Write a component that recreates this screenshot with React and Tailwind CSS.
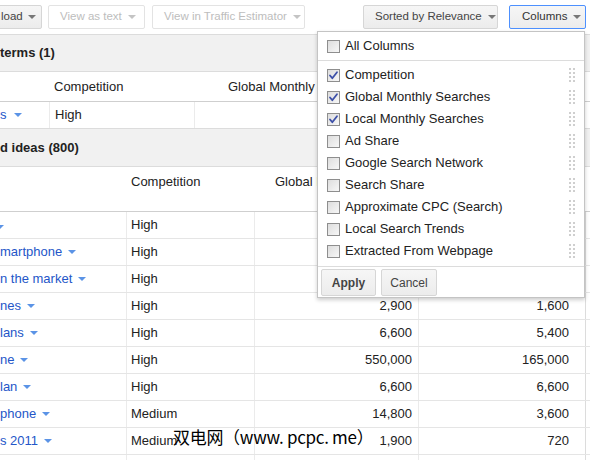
import React from 'react';

function GrayCaret() {
    return <span className="inline-block w-0 h-0 border-l-[4px] border-r-[4px] border-t-[4px] border-l-transparent border-r-transparent border-t-[#777]" />;
}

function LightCaret() {
    return <span className="inline-block w-0 h-0 border-l-[4px] border-r-[4px] border-t-[4px] border-l-transparent border-r-transparent border-t-[#c4c4c4]" />;
}

function BlueCaret() {
    return <span className="inline-block w-0 h-0 border-l-[4px] border-r-[4px] border-t-[4px] border-l-transparent border-r-transparent border-t-[#5b93e6]" />;
}

function Checkbox({ checked }) {
    return (
        <svg width="13" height="13" viewBox="0 0 13 13" className="shrink-0">
            <defs>
                <linearGradient id="cbg" x1="0" y1="0" x2="1" y2="1">
                    <stop offset="0" stopColor="#dcdcdc" />
                    <stop offset="1" stopColor="#f8f8f8" />
                </linearGradient>
            </defs>
            <rect x="0.5" y="0.5" width="12" height="12" fill="url(#cbg)" stroke="#8e8e8e" />
            {checked && (
                <path d="M3 6.5 L5.3 9.2 L10 3.2" fill="none" stroke="#3d50a8" strokeWidth="1.8" strokeLinecap="round" strokeLinejoin="round" />
            )}
        </svg>
    );
}

function Grip() {
    return (
        <div className="grid grid-cols-2 gap-x-[2px] gap-y-[2px]">
            {Array.from({ length: 8 }).map((_, i) => (
                <span key={i} className="block w-[2px] h-[2px] bg-[#cfcfcf]" />
            ))}
        </div>
    );
}

const columnas = [
    { nombre: 'Competition', activo: true },
    { nombre: 'Global Monthly Searches', activo: true },
    { nombre: 'Local Monthly Searches', activo: true },
    { nombre: 'Ad Share', activo: false },
    { nombre: 'Google Search Network', activo: false },
    { nombre: 'Search Share', activo: false },
    { nombre: 'Approximate CPC (Search)', activo: false },
    { nombre: 'Local Search Trends', activo: false },
    { nombre: 'Extracted From Webpage', activo: false },
];

const ideas = [
    { kw: '', comp: 'High', global: '', local: '', shift: true },
    { kw: 'martphone', comp: 'High', global: '', local: '' },
    { kw: 'n the market', comp: 'High', global: '', local: '' },
    { kw: 'nes', comp: 'High', global: '2,900', local: '1,600' },
    { kw: 'lans', comp: 'High', global: '6,600', local: '5,400' },
    { kw: 'ne', comp: 'High', global: '550,000', local: '165,000' },
    { kw: 'lan', comp: 'High', global: '6,600', local: '6,600' },
    { kw: 'phone', comp: 'Medium', global: '14,800', local: '3,600' },
    { kw: 's 2011', comp: 'Medium', global: '1,900', local: '720' },
    { kw: '', comp: '', global: '', local: '', empty: true },
];

export default function App() {
    return (
        <div className="relative w-[590px] h-[460px] overflow-hidden bg-white font-['Liberation_Sans',Arial,sans-serif] text-[13px] text-[#222]">
            {/* Toolbar */}
            <div className="flex h-[34px] items-start pt-[5px] text-[11.5px]">
                <div className="-ml-[8px] w-[50px] h-[24px] flex items-center gap-[5px] pl-[8px] border border-[#d6d6d6] rounded-[2px] bg-gradient-to-b from-[#f6f6f6] to-[#ececec] text-[#444]">
                    <span>load</span>
                    <GrayCaret />
                </div>
                <div className="ml-[6px] w-[97px] h-[24px] flex items-center gap-[6px] pl-[11px] border border-[#e3e3e3] rounded-[2px] bg-white text-[#bdbdbd]">
                    <span>View as text</span>
                    <LightCaret />
                </div>
                <div className="ml-[7px] w-[153px] h-[24px] flex items-center gap-[6px] pl-[11px] border border-[#e3e3e3] rounded-[2px] bg-white text-[#bdbdbd]">
                    <span>View in Traffic Estimator</span>
                    <LightCaret />
                </div>
                <div className="ml-[58px] w-[135px] h-[24px] flex items-center gap-[6px] pl-[11px] border border-[#d6d6d6] rounded-[2px] bg-gradient-to-b from-[#f6f6f6] to-[#ececec] text-[#444]">
                    <span>Sorted by Relevance</span>
                    <GrayCaret />
                </div>
                <div className="ml-[11px] w-[77px] h-[24px] flex items-center gap-[6px] pl-[12px] border border-[#4d90fe] rounded-[2px] bg-gradient-to-b from-[#f6f6f6] to-[#ececec] text-[#333]">
                    <span>Columns</span>
                    <GrayCaret />
                </div>
            </div>

            {/* Section 1 */}
            <div className="h-[38px] flex items-center bg-[#f1f1f1] border-y border-[#dcdcdc] font-bold">
                terms (1)
            </div>
            <div className="h-[30px] flex items-center border-b border-[#cfcfcf]">
                <span className="ml-[54px] w-[174px]">Competition</span>
                <span className="w-[89px] overflow-hidden whitespace-nowrap">Global Monthly Searches</span>
            </div>
            <div className="h-[26px] flex">
                <div className="w-[50px] flex items-center gap-[7px] border-r border-[#ebebeb] text-[#2456c8]">
                    <span>s</span>
                    <BlueCaret />
                </div>
                <div className="w-[145px] flex items-center pl-[5px] border-r border-[#ebebeb]">High</div>
            </div>

            {/* Section 2 */}
            <div className="h-[39px] flex items-center bg-[#f1f1f1] border-y border-[#dcdcdc] font-bold">
                d ideas (800)
            </div>
            <div className="h-[45px] flex items-start pt-[5px] border-b border-[#cfcfcf]">
                <span className="ml-[131px] w-[144px]">Competition</span>
                <span className="w-[42px] overflow-hidden whitespace-nowrap">Global Monthly</span>
            </div>
            {ideas.map((r, i) => (
                <div key={i} className="h-[27px] flex border-b border-[#e5e5e5]">
                    <div className="w-[127px] flex items-center gap-[6px] border-r border-[#ebebeb] text-[#2456c8]">
                        {r.shift ? (
                            <span className="-ml-[4px]"><BlueCaret /></span>
                        ) : r.empty ? null : (
                            <>
                                <span className="whitespace-nowrap">{r.kw}</span>
                                <BlueCaret />
                            </>
                        )}
                    </div>
                    <div className="w-[128px] flex items-center pl-[4px] border-r border-[#ebebeb]">{r.comp}</div>
                    <div className="w-[164px] flex items-center justify-end pr-[6px] border-r border-[#ebebeb]">{r.global}</div>
                    <div className="w-[167px] flex items-center justify-end pr-[16px] border-r border-[#dcdcdc]">{r.local}</div>
                </div>
            ))}

            {/* Columns menu */}
            <div className="absolute left-[317px] top-[31px] w-[268px] h-[267px] flex flex-col bg-white border border-[#c4c4c4] shadow-[0_2px_4px_rgba(0,0,0,0.2)]">
                <div className="pt-[3px] pb-[3px]">
                    <div className="h-[22px] flex items-center gap-[5px] pl-[9px]">
                        <Checkbox checked={false} />
                        <span>All Columns</span>
                    </div>
                </div>
                <div className="border-t border-[#dcdcdc] pt-[3px] pb-[4px]">
                    {columnas.map((c) => (
                        <div key={c.nombre} className="h-[22px] flex items-center gap-[5px] pl-[9px] pr-[9px]">
                            <Checkbox checked={c.activo} />
                            <span className="flex-1">{c.nombre}</span>
                            <Grip />
                        </div>
                    ))}
                </div>
                <div className="border-t border-[#dcdcdc] flex gap-[5px] pl-[3px] pt-[2px]">
                    <button className="w-[55px] h-[27px] border border-[#d6d6d6] rounded-[2px] bg-gradient-to-b from-[#f6f6f6] to-[#ececec] text-[12px] font-bold text-[#444]">Apply</button>
                    <button className="w-[56px] h-[27px] border border-[#d6d6d6] rounded-[2px] bg-gradient-to-b from-[#f6f6f6] to-[#ececec] text-[12px] text-[#444]">Cancel</button>
                </div>
            </div>

            {/* Watermark */}
            <div className="absolute left-[173px] top-[425px] text-[17px] leading-[24px] tracking-[-0.3px] text-black font-['Noto_Sans_CJK_SC',sans-serif] whitespace-nowrap">
                双电网（www. pcpc. me）
            </div>
        </div>
    );
}
